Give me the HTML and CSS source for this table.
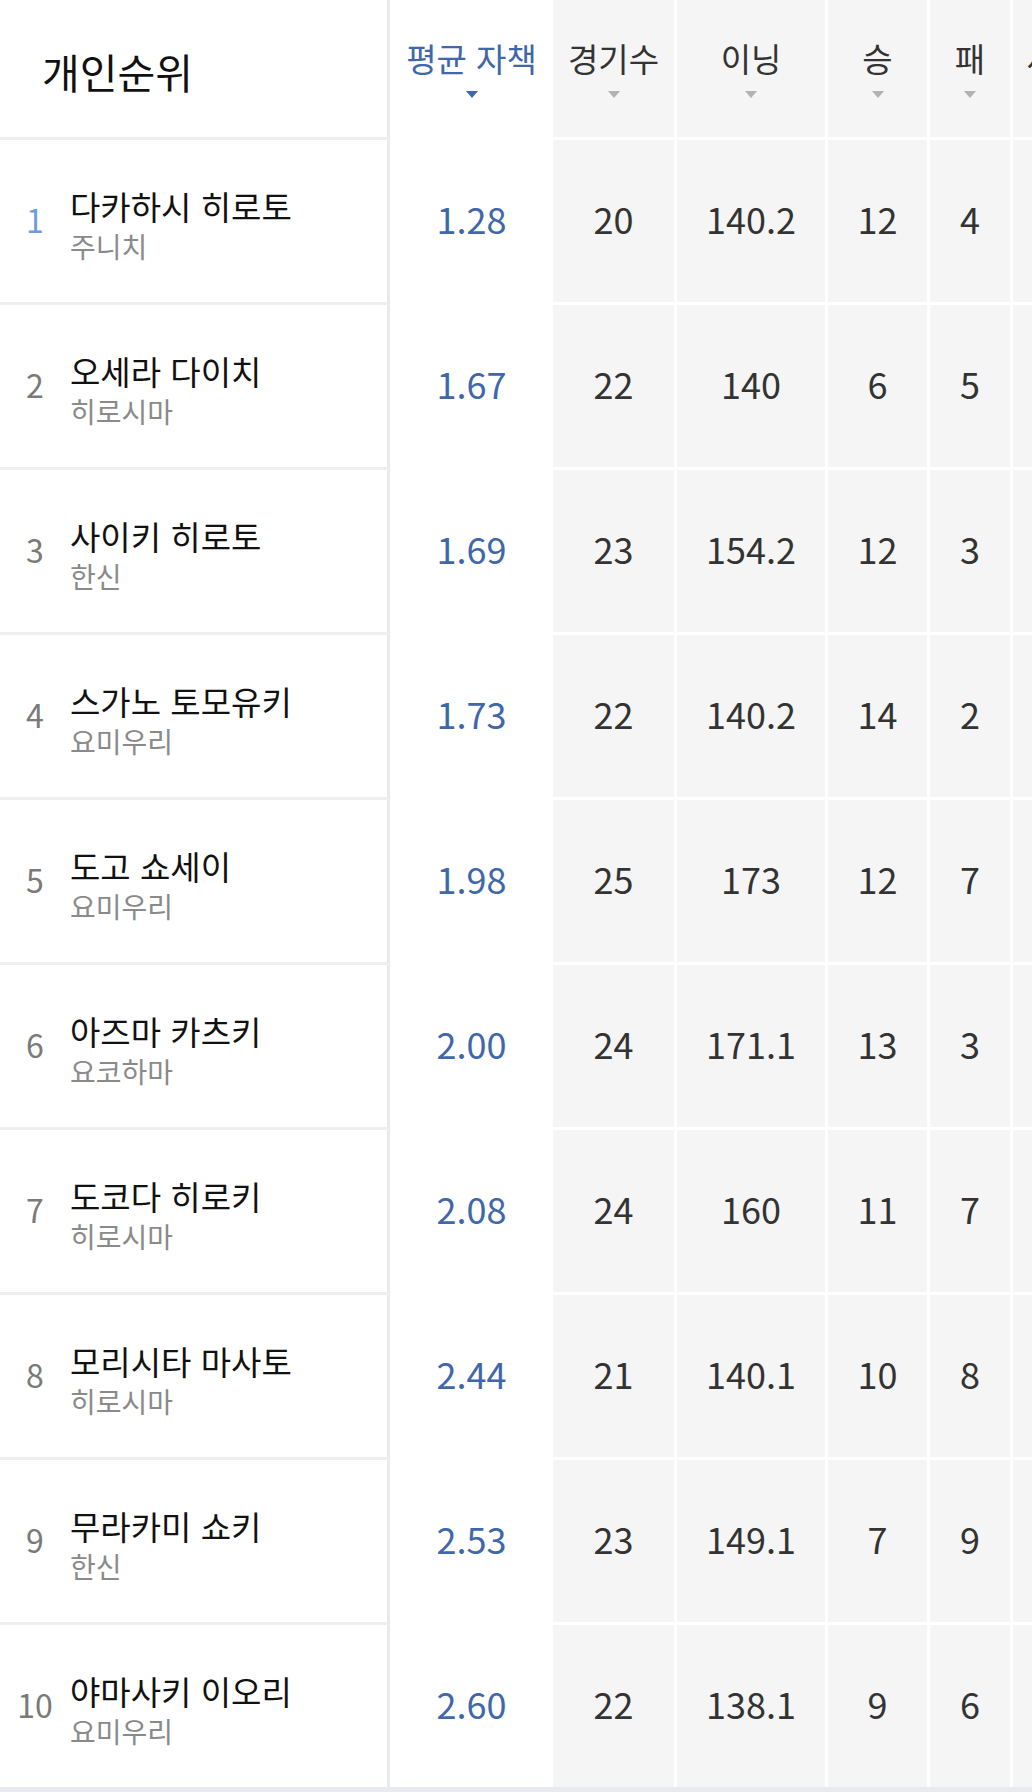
FILE: index.html
```html
<!DOCTYPE html>
<html lang="ko">
<head>
<meta charset="utf-8">
<link rel="stylesheet" href="styles.css">
</head>
<body>
<div class="board">
  <div class="row head">
    <div class="c-player"><span class="title">개인순위</span></div>
    <div class="c-era"><span class="h-label">평균 자책</span><span class="caret"></span></div>
    <div class="c-stat w1"><span class="h-label">경기수</span><span class="caret"></span></div>
    <div class="c-stat w2"><span class="h-label">이닝</span><span class="caret"></span></div>
    <div class="c-stat w3"><span class="h-label">승</span><span class="caret"></span></div>
    <div class="c-stat w4"><span class="h-label">패</span><span class="caret"></span></div>
    <div class="c-stat w5"><span class="h-label">세이브</span><span class="caret"></span></div>
  </div>

  <div class="row">
    <div class="c-player"><span class="rank first">1</span><div class="who"><span class="name">다카하시 히로토</span><span class="team">주니치</span></div></div>
    <div class="c-era"><span class="era">1.28</span></div>
    <div class="c-stat w1">20</div><div class="c-stat w2">140.2</div><div class="c-stat w3">12</div><div class="c-stat w4">4</div><div class="c-stat w5"></div>
  </div>
  <div class="row">
    <div class="c-player"><span class="rank">2</span><div class="who"><span class="name">오세라 다이치</span><span class="team">히로시마</span></div></div>
    <div class="c-era"><span class="era">1.67</span></div>
    <div class="c-stat w1">22</div><div class="c-stat w2">140</div><div class="c-stat w3">6</div><div class="c-stat w4">5</div><div class="c-stat w5"></div>
  </div>
  <div class="row">
    <div class="c-player"><span class="rank">3</span><div class="who"><span class="name">사이키 히로토</span><span class="team">한신</span></div></div>
    <div class="c-era"><span class="era">1.69</span></div>
    <div class="c-stat w1">23</div><div class="c-stat w2">154.2</div><div class="c-stat w3">12</div><div class="c-stat w4">3</div><div class="c-stat w5"></div>
  </div>
  <div class="row">
    <div class="c-player"><span class="rank">4</span><div class="who"><span class="name">스가노 토모유키</span><span class="team">요미우리</span></div></div>
    <div class="c-era"><span class="era">1.73</span></div>
    <div class="c-stat w1">22</div><div class="c-stat w2">140.2</div><div class="c-stat w3">14</div><div class="c-stat w4">2</div><div class="c-stat w5"></div>
  </div>
  <div class="row">
    <div class="c-player"><span class="rank">5</span><div class="who"><span class="name">도고 쇼세이</span><span class="team">요미우리</span></div></div>
    <div class="c-era"><span class="era">1.98</span></div>
    <div class="c-stat w1">25</div><div class="c-stat w2">173</div><div class="c-stat w3">12</div><div class="c-stat w4">7</div><div class="c-stat w5"></div>
  </div>
  <div class="row">
    <div class="c-player"><span class="rank">6</span><div class="who"><span class="name">아즈마 카츠키</span><span class="team">요코하마</span></div></div>
    <div class="c-era"><span class="era">2.00</span></div>
    <div class="c-stat w1">24</div><div class="c-stat w2">171.1</div><div class="c-stat w3">13</div><div class="c-stat w4">3</div><div class="c-stat w5"></div>
  </div>
  <div class="row">
    <div class="c-player"><span class="rank">7</span><div class="who"><span class="name">도코다 히로키</span><span class="team">히로시마</span></div></div>
    <div class="c-era"><span class="era">2.08</span></div>
    <div class="c-stat w1">24</div><div class="c-stat w2">160</div><div class="c-stat w3">11</div><div class="c-stat w4">7</div><div class="c-stat w5"></div>
  </div>
  <div class="row">
    <div class="c-player"><span class="rank">8</span><div class="who"><span class="name">모리시타 마사토</span><span class="team">히로시마</span></div></div>
    <div class="c-era"><span class="era">2.44</span></div>
    <div class="c-stat w1">21</div><div class="c-stat w2">140.1</div><div class="c-stat w3">10</div><div class="c-stat w4">8</div><div class="c-stat w5"></div>
  </div>
  <div class="row">
    <div class="c-player"><span class="rank">9</span><div class="who"><span class="name">무라카미 쇼키</span><span class="team">한신</span></div></div>
    <div class="c-era"><span class="era">2.53</span></div>
    <div class="c-stat w1">23</div><div class="c-stat w2">149.1</div><div class="c-stat w3">7</div><div class="c-stat w4">9</div><div class="c-stat w5"></div>
  </div>
  <div class="row last">
    <div class="c-player"><span class="rank">10</span><div class="who"><span class="name">야마사키 이오리</span><span class="team">요미우리</span></div></div>
    <div class="c-era"><span class="era">2.60</span></div>
    <div class="c-stat w1">22</div><div class="c-stat w2">138.1</div><div class="c-stat w3">9</div><div class="c-stat w4">6</div><div class="c-stat w5"></div>
  </div>
</div>
</body>
</html>
```

FILE: styles.css
```css
html, body {
  margin: 0;
  padding: 0;
  background: #ffffff;
}

body {
  width: 1032px;
  height: 1792px;
  overflow: hidden;
  font-family: "Noto Sans CJK KR", "Noto Sans", sans-serif;
  color: #111;
}

.board {
  width: 1032px;
  overflow: hidden;
  border-bottom: 5px solid #e8eaef;
}

.row {
  display: flex;
  height: 165px;
  width: 1200px;
}

.row.head {
  height: 140px;
}

.row.last {
  height: 162px;
}

.row > div {
  box-sizing: border-box;
  flex: none;
  height: 100%;
  display: flex;
  align-items: center;
  justify-content: center;
}

.row.last > div {
  border-bottom: none;
}

.c-player {
  width: 390px;
  border-right: 3px solid #e9e9e9;
  border-bottom: 3px solid #efefef;
  justify-content: flex-start !important;
}

.c-era {
  width: 163px;
  border-bottom: 3px solid #ffffff;
  flex-direction: column;
  padding-bottom: 7px;
}

.c-stat {
  background: #f5f5f5;
  border-right: 3px solid #ffffff;
  border-bottom: 3px solid #ffffff;
  background-clip: padding-box;
  font-size: 36px;
  color: #333;
  padding-bottom: 7px;
}

.head .c-stat,
.head .c-era {
  flex-direction: column;
  justify-content: flex-start;
  padding-top: 38px;
  padding-bottom: 0;
}

.w1 { width: 124px; }
.w2 { width: 151px; }
.w3 { width: 102px; }
.w4 { width: 83px; }
.w5 { width: 121px; }

.title {
  font-size: 41px;
  padding-left: 42px;
  padding-top: 4px;
  color: #111;
}

.h-label {
  font-size: 33px;
  line-height: 40px;
  color: #333;
  white-space: nowrap;
}

.c-era .h-label {
  color: #3f67aa;
}

.caret {
  width: 0;
  height: 0;
  margin-top: 13px;
  border-left: 6px solid transparent;
  border-right: 6px solid transparent;
  border-top: 7px solid #b2b2b2;
}

.c-era .caret {
  border-top-color: #3f67aa;
}

.rank {
  width: 70px;
  text-align: center;
  font-size: 32px;
  color: #7a7a7a;
  flex: none;
  margin-bottom: 4px;
}

.rank.first {
  color: #6b9ed8;
}

.who {
  display: flex;
  flex-direction: column;
  padding-top: 5px;
}

.name {
  font-size: 33px;
  line-height: 44px;
  color: #111;
  white-space: nowrap;
}

.team {
  font-size: 28px;
  line-height: 36px;
  color: #8a8a8a;
}

.era {
  font-size: 36px;
  color: #3f67aa;
}
```
